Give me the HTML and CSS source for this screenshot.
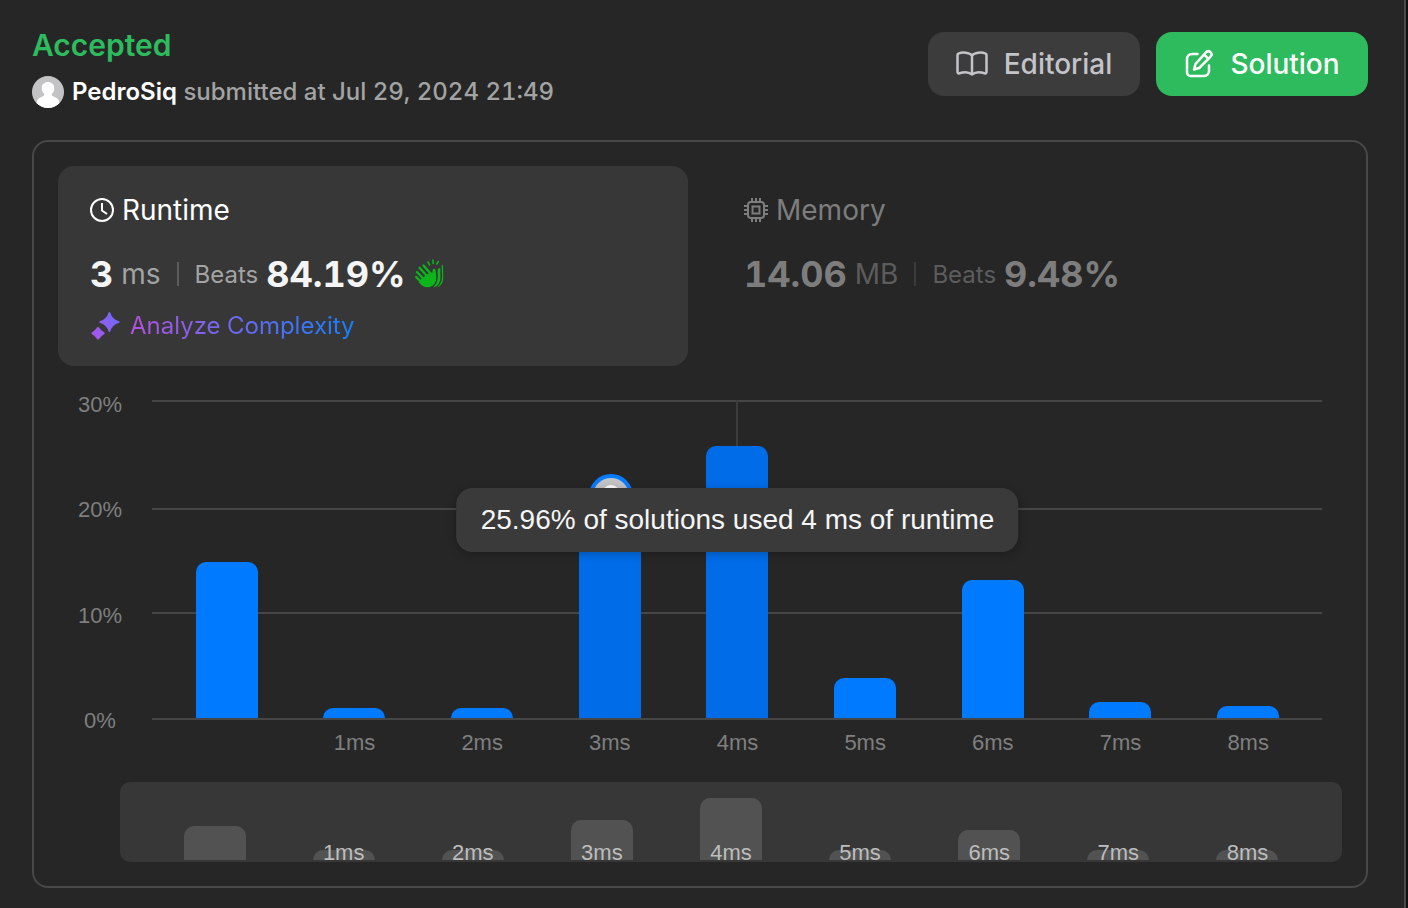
FILE: index.html
```
<!DOCTYPE html>
<html lang="en">
<head>
<meta charset="utf-8">
<meta name="viewport" content="width=device-width, initial-scale=1">
<title>Submission - Accepted</title>
<link rel="stylesheet" href="styles.css">
</head>
<body>
<main class="panel">
  <header class="header">
    <div class="summary">
      <h1 class="status">Accepted</h1>
      <div class="author">
        <svg class="avatar" viewBox="0 0 32 32" aria-hidden="true">
          <clipPath id="disc"><circle cx="16" cy="16" r="16"/></clipPath>
          <g clip-path="url(#disc)"><path fill="#c3c3c5" d="M0 0h32v32H0z"/><path fill="#fff" d="M16 6c3.600 0 6.300 2.500 6.300 6 0 2.600-1 4.600-2.400 5.800-.5 1.200.4 2.300 1.700 2.800 3 1 5.300 2.900 6 5.800L24 33H8l-3.600-6.600c.7-2.900 3-4.800 6-5.800 1.300-.5 2.200-1.600 1.700-2.800-1.400-1.200-2.400-3.200-2.400-5.800 0-3.500 2.700-6 6.300-6z"/></g>
        </svg>
        <p class="byline"><strong class="name">PedroSiq</strong> submitted at Jul 29, 2024 21:49</p>
      </div>
    </div>
    <div class="actions">
      <button class="button" type="button">
        <svg class="icon-book" viewBox="0 0 32 28" aria-hidden="true"><path d="M16 5.500C13.500 2.300 6.500 1.800 2.800 3.300c-.8.300-1.300.9-1.300 1.700v17c0 1.100.9 1.700 2 1.300 4-1.300 9.500-1.200 12.500 1.200 3-2.400 8.500-2.500 12.500-1.200 1.100.4 2-.2 2-1.300V5c0-.8-.5-1.400-1.300-1.700C25.500 1.800 18.500 2.300 16 5.500zM16 5.500v19"/></svg>
        Editorial
      </button>
      <button class="button primary" type="button">
        <svg class="icon-edit" viewBox="0 0 30 30" aria-hidden="true"><path d="M13.500 5H8a5 5 0 0 0-5 5v13.500A3.500 3.500 0 0 0 6.500 27H20a5 5 0 0 0 5-5v-5.500M22.200 3.200a3 3 0 0 1 4.200 0l.2.200a3 3 0 0 1 0 4.200L15.200 19l-5.200 1.500L11.500 15zM20 5.400l4.400 4.400"/></svg>
        Solution
      </button>
    </div>
  </header>

  <section class="card">
    <div class="tabs">
      <section class="tab active">
        <h2 class="tab-title">
          <svg class="icon-title" viewBox="0 0 24 24" aria-hidden="true"><circle cx="12" cy="12" r="11"/><path d="M12 5v7.500l5 3.500"/></svg>
          Runtime
        </h2>
        <div class="stats">
          <span class="value">3</span><span class="unit">ms</span><span class="divider"></span><span class="beats">Beats</span><span class="value">84.19%</span>
          <svg class="icon-clap" viewBox="0 0 30 30" aria-hidden="true">
            <path fill="#0bb51b" d="M23.500 13.500c1.200 6.500-.8 11.500-4.500 15 5-1 7.600-5 7.400-11l-.1-7.200c0-1.500-2.400-1.500-2.500.1zM28 14.500c.7 6-1.500 11-5 14 4-1.300 6.300-5 6.200-10.500l-.1-11c0-1-1.200-1.300-1.500-.3z"/>
            <path fill="none" stroke="#0bb51b" stroke-width="2.400" stroke-linecap="round" d="M9.500 6.500l10 11.500M5.500 8.800l9 10M3 13l8 8.500M2.200 18l6 6"/>
            <path fill="#0bb51b" d="M7 20l9.500-7 1.800 1.200.4-3.200c.2-1.800 2.600-1.500 2.800.2l.8 6.300c.5 6-3.300 10.600-8.300 10.800-4 .2-6.300-1.700-9.300-5z"/>
            <path fill="none" stroke="#0bb51b" stroke-width="1.600" stroke-linecap="round" d="M14 3l1.600 3M19 1l.2 3.500M24.300 2.500L22.700 5"/>
          </svg>
        </div>
        <a class="analyze" href="#analyze">
          <svg class="icon-spark" viewBox="0 0 30 30" aria-hidden="true">
            <linearGradient id="spark" gradientUnits="userSpaceOnUse" x1="2" y1="24" x2="30" y2="8"><stop stop-color="#a855e8"/><stop offset="1" stop-color="#6f6af8"/></linearGradient>
            <path fill="url(#spark)" d="M18.600 1.500q.8-1 1.600 0 1.900 6.600 8.900 8.800 1 .7 0 1.400-7 2.200-8.900 8.800-.8 1-1.600 0-1.900-6.600-8.900-8.800-1-.7 0-1.400 7-2.200 8.900-8.800zM7.300 16.200q.8-.8 1.500 0 2.300 3.400 5.500 5.300.8.700 0 1.400-3.200 2-5.500 5.400-.7.800-1.500 0-2.300-3.400-5.500-5.400-.8-.7 0-1.400 3.200-1.900 5.500-5.300z"/>
          </svg>
          <span class="analyze-text">Analyze Complexity</span>
        </a>
      </section>
      <section class="tab muted">
        <h2 class="tab-title">
          <svg class="icon-title" viewBox="0 0 24 24" aria-hidden="true"><rect x="4" y="4" width="16" height="16" rx="3"/><rect x="8.500" y="8.500" width="7" height="7"/><path d="M8 4V0M12 4V0M16 4V0M8 24v-4M12 24v-4M16 24v-4M4 8H0M4 12H0M4 16H0M24 8h-4M24 12h-4M24 16h-4"/></svg>
          Memory
        </h2>
        <div class="stats">
          <span class="value">14.06</span><span class="unit">MB</span><span class="divider"></span><span class="beats">Beats</span><span class="value">9.48%</span>
        </div>
      </section>
    </div>

    <div class="chart">
      <div class="y-axis"><span>30%</span><span>20%</span><span>10%</span><span>0%</span></div>
      <div class="plot-area">
        <div class="plot">
          <div class="gridlines"><i></i><i></i><i></i></div>
          <div class="columns">
            <div class="column"><div class="bar" style="height:156px"></div></div>
            <div class="column"><div class="bar" style="height:10px"></div></div>
            <div class="column"><div class="bar" style="height:10px"></div></div>
            <div class="column"><div class="bar dim" style="height:222px">
              <svg class="marker" viewBox="0 0 44 44" aria-hidden="true"><circle cx="22" cy="22" r="20" fill="#c3c3c5" stroke="#087cff" stroke-width="4"/><circle cx="22" cy="20" r="9" fill="#fff"/><path fill="#fff" d="M9 35c2-10 24-10 26 0-6 6-20 6-26 0z"/></svg>
            </div></div>
            <div class="column hovered"><div class="bar dim" style="height:272px">
              <div class="tooltip" role="tooltip">25.96% of solutions used 4 ms of runtime</div>
            </div></div>
            <div class="column"><div class="bar" style="height:40px"></div></div>
            <div class="column"><div class="bar" style="height:138px"></div></div>
            <div class="column"><div class="bar" style="height:16px"></div></div>
            <div class="column"><div class="bar" style="height:12px"></div></div>
          </div>
        </div>
        <div class="x-axis"><span></span><span>1ms</span><span>2ms</span><span>3ms</span><span>4ms</span><span>5ms</span><span>6ms</span><span>7ms</span><span>8ms</span></div>
      </div>
    </div>

    <div class="overview">
      <div class="mini"><div class="mini-bar" style="height:34px"></div></div>
      <div class="mini"><div class="mini-bar" style="height:10px"></div><span>1ms</span></div>
      <div class="mini"><div class="mini-bar" style="height:10px"></div><span>2ms</span></div>
      <div class="mini"><div class="mini-bar" style="height:40px"></div><span>3ms</span></div>
      <div class="mini"><div class="mini-bar" style="height:62px"></div><span>4ms</span></div>
      <div class="mini"><div class="mini-bar" style="height:10px"></div><span>5ms</span></div>
      <div class="mini"><div class="mini-bar" style="height:30px"></div><span>6ms</span></div>
      <div class="mini"><div class="mini-bar" style="height:10px"></div><span>7ms</span></div>
      <div class="mini"><div class="mini-bar" style="height:10px"></div><span>8ms</span></div>
    </div>
  </section>
</main>
</body>
</html>
```

FILE: styles.css
```
* {
  box-sizing: border-box;
}

body {
  margin: 0;
  background: #0f0f0f;
  color: #fff;
  font-family: Inter, "Liberation Sans", sans-serif;
  font-variant-numeric: tabular-nums;
}

h1,
h2,
p {
  margin: 0;
}

.panel {
  min-height: 100vh;
  margin-right: 2px;
  padding: 28px 36px 20px 32px;
  border-right: 2px solid #4a4a4a;
  background: #262626;
}

/* Header */
.header {
  display: flex;
  justify-content: space-between;
  align-items: flex-start;
  margin-bottom: 32px;
}

.status {
  margin-bottom: 14px;
  color: #2dbb5d;
  font-size: 30px;
  line-height: 34px;
  font-weight: 600;
}

.author {
  display: flex;
  align-items: center;
  gap: 8px;
  height: 32px;
}

.avatar {
  width: 32px;
  height: 32px;
}

.byline {
  color: #a3a3a3;
  font-size: 24px;
  line-height: 34px;
  font-weight: 500;
}

.name {
  color: #fff;
  font-weight: 600;
}

.actions {
  display: flex;
  gap: 16px;
  margin-top: 4px;
}

.button {
  display: flex;
  align-items: center;
  justify-content: center;
  gap: 16px;
  width: 212px;
  height: 64px;
  padding: 0;
  border: 0;
  border-radius: 16px;
  background: #3c3c3c;
  color: #c4c4c8;
  font: 500 28px/32px Inter, "Liberation Sans", sans-serif;
}

.button.primary {
  background: #2dbb5d;
  color: #fff;
}

.icon-book,
.icon-edit {
  fill: none;
  stroke: currentColor;
  stroke-width: 2.5;
  stroke-linejoin: round;
  stroke-linecap: round;
}

.icon-book {
  width: 32px;
  height: 28px;
}

.icon-edit {
  width: 30px;
  height: 30px;
}

/* Result card */
.card {
  padding: 24px;
  border: 2px solid #484848;
  border-radius: 16px;
}

.tabs {
  display: grid;
  grid-template-columns: 1fr 1fr;
  gap: 24px;
}

.tab {
  padding: 28px 32px 24px;
  border-radius: 16px;
}

.tab.active {
  background: #373737;
}

.tab-title {
  display: flex;
  align-items: center;
  gap: 8px;
  margin-bottom: 28px;
  font-size: 28px;
  line-height: 32px;
  font-weight: 400;
}

.icon-title {
  width: 24px;
  height: 24px;
  fill: none;
  stroke: currentColor;
  stroke-width: 2;
}

.stats {
  display: flex;
  align-items: center;
  gap: 8px;
  height: 40px;
  margin-bottom: 16px;
}

.value {
  color: #f5f5f5;
  font-size: 36px;
  font-weight: 700;
}

.unit {
  color: #a3a3a3;
  font-size: 28px;
}

.divider {
  width: 2px;
  height: 24px;
  margin: 0 8px;
  background: #5c5c5c;
}

.beats {
  color: #a3a3a3;
  font-size: 24px;
}

.icon-clap {
  width: 30px;
  height: 30px;
}

.muted .tab-title,
.muted .value {
  color: #7d7d7d;
}

.muted .unit,
.muted .beats {
  color: #5c5c5c;
}

.muted .divider {
  background: #3c3c3c;
}

.analyze {
  display: flex;
  align-items: center;
  gap: 10px;
  width: fit-content;
  font-size: 24px;
  line-height: 34px;
  text-decoration: none;
  height: 32px;
}

.icon-spark {
  width: 30px;
  height: 30px;
}

.analyze-text {
  background: linear-gradient(90deg, #b350dc, #7566f0 40%, #1480ff);
  background-clip: text;
  color: transparent;
}

/* Distribution chart */
.chart,
.overview {
  font-family: "Liberation Sans", Arial, sans-serif;
  font-size: 22px;
}

.chart {
  display: flex;
  gap: 10px;
  margin-top: 26px;
  padding-right: 20px;
  color: #7f7f7f;
}

.y-axis {
  display: flex;
  flex-direction: column;
  justify-content: space-between;
  align-items: center;
  width: 84px;
  height: 342px;
  line-height: 26px;
}

.plot-area {
  flex: 1;
  padding-top: 8px;
}

.plot {
  display: grid;
  border-bottom: 2px solid #464646;
}

.gridlines,
.columns {
  grid-area: 1 / 1;
}

.gridlines {
  display: grid;
  grid-template-rows: 108px 104px 106px;
}

.gridlines i {
  border-top: 2px solid #464646;
}

.columns,
.x-axis {
  display: grid;
  grid-template-columns: repeat(9, 1fr);
  padding: 0 10px 0 11px;
}

.column {
  position: relative;
  display: flex;
  align-items: flex-end;
  justify-content: center;
}

.column.hovered {
  z-index: 1;
}

.hovered::before {
  content: "";
  position: absolute;
  top: 0;
  bottom: 0;
  left: 50%;
  width: 2px;
  margin-left: -1px;
  background: #3c3c3c;
}

.bar {
  position: relative;
  width: 62px;
  border-radius: 10px 10px 0 0;
  background: #007bff;
}

.bar.dim {
  background: #006ce8;
}

.marker {
  position: absolute;
  top: -22px;
  left: 10px;
  width: 44px;
  height: 44px;
}

.tooltip {
  position: absolute;
  top: 42px;
  left: 50%;
  padding: 16px 24px;
  border-radius: 16px;
  background: #3a3a3a;
  box-shadow: 0 2px 8px rgba(0, 0, 0, 0.25);
  color: #f5f5f5;
  font-size: 28px;
  line-height: 32px;
  white-space: nowrap;
  transform: translateX(-50%);
}

.x-axis {
  padding-top: 11px;
  line-height: 24px;
  text-align: center;
}

/* Range overview strip */
.overview {
  display: grid;
  grid-template-columns: repeat(9, 1fr);
  height: 80px;
  margin: 27px 0 0 62px;
  padding: 0 30px 2px;
  border-radius: 10px;
  background: #373737;
  color: #bdbdbd;
  line-height: 14px;
}

.mini {
  display: grid;
  align-items: end;
  justify-items: center;
}

.mini > * {
  grid-area: 1 / 1;
}

.mini-bar {
  width: 62px;
  border-radius: 10px 10px 0 0;
  background: #525252;
}
```
